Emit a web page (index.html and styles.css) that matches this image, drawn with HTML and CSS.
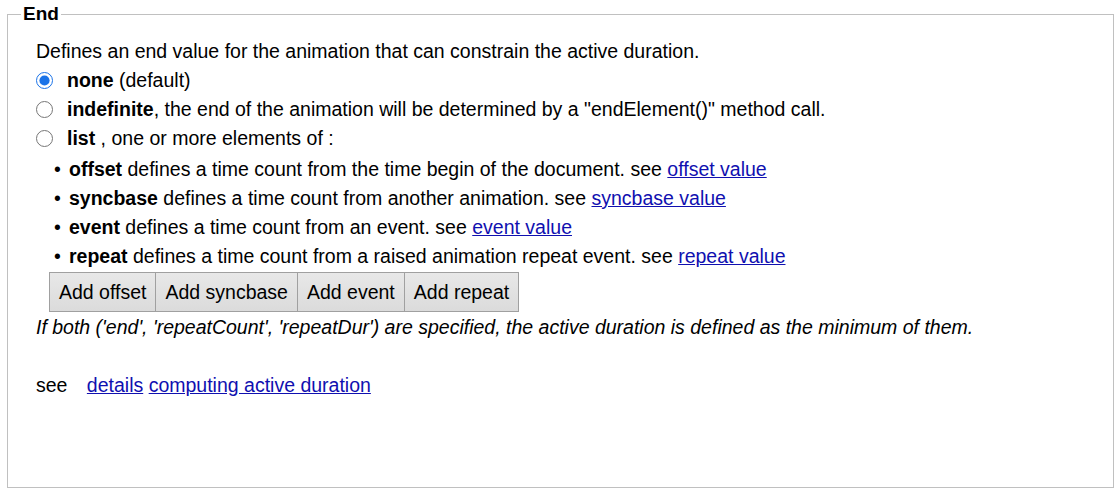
FILE: index.html
```html
<!DOCTYPE html>
<html lang="en">
  <head>
    <meta charset="UTF-8" />
    <title>End</title>
    <link rel="stylesheet" href="styles.css">
  </head>
  <body>
    <fieldset class="panel">
      <legend>End</legend>
      <p class="intro">Defines an end value for the animation that can constrain the active duration.</p>
      <label class="choice"><input type="radio" name="end" checked> <b>none</b> (default)</label>
      <label class="choice"><input type="radio" name="end"> <b>indefinite</b>, the end of the animation will be determined by a "endElement()" method call.</label>
      <label class="choice"><input type="radio" name="end"> <b>list</b> , one or more elements of :</label>
      <ul class="kinds">
        <li><b>offset</b> defines a time count from the time begin of the document. see <a href="#">offset value</a></li>
        <li><b>syncbase</b> defines a time count from another animation. see <a href="#">syncbase value</a></li>
        <li><b>event</b> defines a time count from an event. see <a href="#">event value</a></li>
        <li><b>repeat</b> defines a time count from a raised animation repeat event. see <a href="#">repeat value</a></li>
      </ul>
      <div class="btns">
        <button>Add offset</button><button>Add syncbase</button><button>Add event</button><button>Add repeat</button>
      </div>
      <p class="note">If both ('end', 'repeatCount', 'repeatDur') are specified, the active duration is defined as the minimum of them.</p>
      <p class="see">see <a href="#" class="first">details</a> <a href="#">computing active duration</a></p>
    </fieldset>
  </body>
</html>
```

FILE: styles.css
```css
body {
  margin: 0;
  font-family: "Liberation Sans", Arial, sans-serif;
  font-size: 19.5px;
  color: #000;
  background: #fff;
}
.panel {
  margin: 3px 6px 0 7px;
  height: 485px;
  box-sizing: border-box;
  border: 1px solid #c0c0c0;
  padding: 18px 20px 0 28px;
}
legend {
  font-weight: bold;
  font-size: 19px;
  padding: 0 2px;
  margin-left: -15px;
}
p {
  margin: 0;
  line-height: 29px;
}
.intro {
  margin-top: -6px;
}
.choice {
  display: flex;
  align-items: center;
  line-height: 29px;
  white-space: pre;
}
.choice input {
  width: 17px;
  height: 17px;
  margin: 0 14px 0 0;
  accent-color: #1a73e8;
}
.kinds {
  margin: 2px 0 0;
  padding: 0 0 0 33px;
  list-style: none;
}
.kinds li {
  line-height: 29px;
  position: relative;
}
.kinds li::before {
  content: "\2022";
  position: absolute;
  left: -15px;
}
a {
  color: #1010b0;
}
.btns {
  display: flex;
  margin: 1px 0 0 13px;
}
.btns button {
  font-family: inherit;
  font-size: 19.5px;
  height: 40px;
  padding: 0 9px;
  border: 1px solid #a0a0a0;
  border-left: none;
  background: linear-gradient(#e8e8e8, #dbdbdb);
  color: #000;
  cursor: pointer;
}
.btns button:first-child {
  border-left: 1px solid #a0a0a0;
}
.note {
  font-style: italic;
  margin-top: 1px;
}
.see {
  margin-top: 29px;
}
.see .first {
  margin-left: 14px;
}
```
